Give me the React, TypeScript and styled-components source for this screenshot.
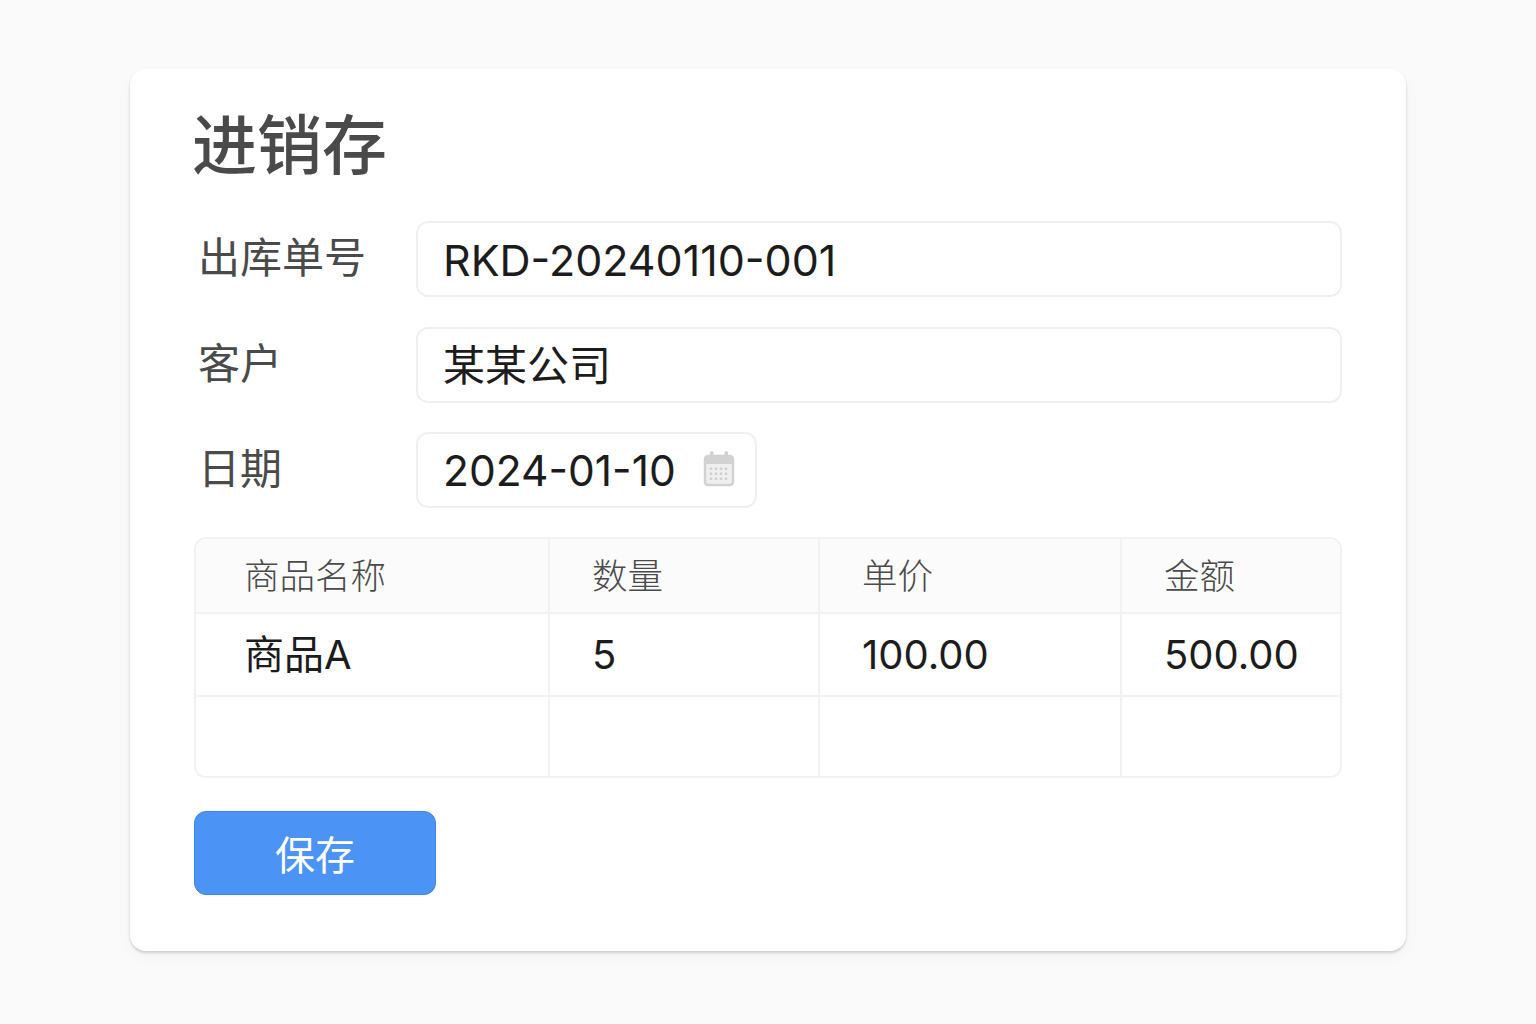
import React from 'react';
import styled, { createGlobalStyle } from 'styled-components';

const Global = createGlobalStyle`
	html, body {
		margin: 0;
		background: #fafafa;
	}
	body {
		font-family: 'Inter', 'Noto Sans CJK SC', sans-serif;
	}
`;

const Page = styled.div`
	box-sizing: border-box;
	height: 1024px;
	padding: 69px 130px 0;
	overflow: hidden;
`;

const Card = styled.div`
	box-sizing: border-box;
	width: 1276px;
	height: 882px;
	padding: 34px 64px 0;
	background: #fff;
	border-radius: 16px;
	box-shadow: 0 2px 3px rgba(0, 0, 0, 0.16), 0 6px 18px rgba(0, 0, 0, 0.03);
`;

const Title = styled.h1`
	margin: 0 0 41px -2px;
	height: 77px;
	font-family: 'Noto Sans CJK SC', sans-serif;
	font-size: 65px;
	line-height: 77px;
	font-weight: 500;
	color: #4a4a4a;
`;

const Form = styled.div`
	display: flex;
	flex-direction: column;
	gap: 29.5px;
`;

const Row = styled.div`
	display: flex;
	align-items: flex-start;
`;

const Label = styled.label`
	width: 222px;
	padding-left: 4px;
	box-sizing: border-box;
	font-family: 'Noto Sans CJK SC', sans-serif;
	font-size: 42px;
	line-height: 67px;
	font-weight: 400;
	color: #4a4a4a;
`;

const Field = styled.div<{ $narrow?: boolean; $size: number }>`
	box-sizing: border-box;
	display: flex;
	align-items: center;
	justify-content: space-between;
	width: ${(p) => (p.$narrow ? '341px' : '926px')};
	height: 76px;
	padding: 3px 20px 0 25px;
	border: 2px solid #f0f0f0;
	border-radius: 12px;
	background: #fff;
	font-size: ${(p) => p.$size}px;
	line-height: 1;
	color: #1c1c1c;
`;

const Table = styled.div`
	box-sizing: border-box;
	display: grid;
	grid-template-columns: 354px 270px 302px 221px;
	grid-template-rows: 75px 83px 82px;
	width: 1148px;
	height: 241px;
	margin-top: 29px;
	border: 2px solid #f2f2f2;
	border-radius: 12px;
	overflow: hidden;
`;

const Cell = styled.div<{ $head?: boolean; $first?: boolean; $last?: boolean; $bottom?: boolean }>`
	box-sizing: border-box;
	padding-left: ${(p) => (p.$first ? '48px' : '42px')};
	padding-top: ${(p) => (p.$head ? '3px' : '0')};
	display: flex;
	align-items: center;
	border-right: ${(p) => (p.$last ? 'none' : '2px solid #f2f2f2')};
	border-bottom: ${(p) => (p.$bottom ? 'none' : '2px solid #f2f2f2')};
	background: ${(p) => (p.$head ? '#fbfbfb' : '#fff')};
	font-size: ${(p) => (p.$head ? '35.5px' : '40px')};
	line-height: 1;
	font-weight: ${(p) => (p.$head ? 300 : 400)};
	color: ${(p) => (p.$head ? '#4a4a4a' : '#1c1c1c')};
`;

const SaveButton = styled.button`
	display: block;
	width: 242px;
	height: 84px;
	margin-top: 33px;
	padding: 0;
	border: 1px solid #3f86ea;
	border-radius: 12px;
	background: #4b93f5;
	font-family: 'Noto Sans CJK SC', sans-serif;
	font-size: 40px;
	color: #fff;
`;

const CalendarSvg = styled.svg`
	margin-top: -6px;
`;

const CalendarIcon = () => (
	<CalendarSvg width='32' height='36' viewBox='0 0 32 36'>
		<rect x='7' y='0' width='3.5' height='8' rx='1.75' fill='#d2d2d2' />
		<rect x='21.5' y='0' width='3.5' height='8' rx='1.75' fill='#d2d2d2' />
		<rect x='2' y='5' width='28' height='29' rx='3' fill='#efefef' stroke='#d2d2d2' strokeWidth='2.5' />
		<path d='M2 8a3 3 0 0 1 3-3h22a3 3 0 0 1 3 3v5H2z' fill='#d2d2d2' />
		{[16.5, 21.5, 26.5].map((y) =>
			[8, 13, 18, 23].map((x) => <rect key={`${x}-${y}`} x={x - 1.25} y={y} width='2.5' height='2.5' rx='0.6' fill='#cfcfcf' />),
		)}
	</CalendarSvg>
);

const rows = [
	['商品名称', '数量', '单价', '金额'],
	['商品A', '5', '100.00', '500.00'],
	['', '', '', ''],
];

const App = () => (
	<Page>
		<Global />
		<Card>
			<Title>进销存</Title>
			<Form>
				<Row>
					<Label>出库单号</Label>
					<Field $size={43}>RKD-20240110-001</Field>
				</Row>
				<Row>
					<Label>客户</Label>
					<Field $size={42}>某某公司</Field>
				</Row>
				<Row>
					<Label>日期</Label>
					<Field $narrow $size={42.5}>
						2024-01-10
						<CalendarIcon />
					</Field>
				</Row>
			</Form>
			<Table>
				{rows.map((row, r) =>
					row.map((text, c) => (
						<Cell key={`${r}-${c}`} $head={r === 0} $first={c === 0} $last={c === 3} $bottom={r === 2}>
							{text}
						</Cell>
					)),
				)}
			</Table>
			<SaveButton>保存</SaveButton>
		</Card>
	</Page>
);

export default App;
